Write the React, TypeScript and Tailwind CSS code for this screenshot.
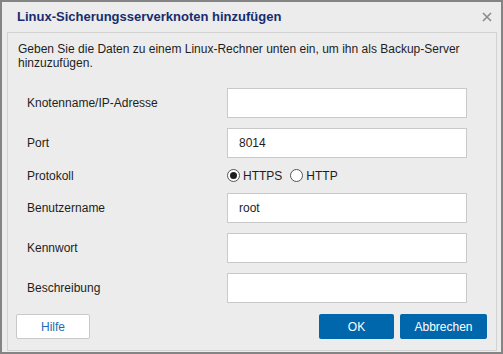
import { useState } from "react";

const font = { fontFamily: '"Liberation Sans", Arial, sans-serif' };

const fields = [
  { label: "Knotenname/IP-Adresse", value: "" },
  { label: "Port", value: "8014" },
];

const fields2 = [
  { label: "Benutzername", value: "root" },
  { label: "Kennwort", value: "", type: "password" },
  { label: "Beschreibung", value: "" },
];

const Row = ({ label, value, type }: { label: string; value: string; type?: string }) => (
  <div className="flex h-[30px] items-center">
    <label className="w-[219px] pl-[19px] text-[12px] text-[#1e1e1e]">{label}</label>
    <input
      type={type ?? "text"}
      defaultValue={value}
      className="h-[30px] w-[240px] border border-[#c9c9c9] bg-white px-[11px] text-[12px] text-[#1e1e1e] outline-none"
    />
  </div>
);

const Radio = ({ checked, label, onClick }: { checked: boolean; label: string; onClick: () => void }) => (
  <button type="button" onClick={onClick} className="flex items-center gap-[3px] text-[12px] text-[#1e1e1e]">
    <span className="flex h-[13px] w-[13px] items-center justify-center rounded-full border border-[#555] bg-white">
      {checked && <span className="h-[7px] w-[7px] rounded-full bg-[#1e1e1e]" />}
    </span>
    {label}
  </button>
);

export default function App() {
  const [proto, setProto] = useState("https");

  return (
    <div className="h-[354px] w-[503px] overflow-hidden bg-[#888]" style={font}>
      <div className="flex h-[354px] flex-col border-2 border-[#848484] bg-[#ececec]">
        <div className="flex h-[30px] shrink-0 items-center justify-between pl-[15px] pr-[9px]">
          <h1 className="text-[13px] font-bold text-[#172d6e]">Linux-Sicherungsserverknoten hinzufügen</h1>
          <svg width="10" height="10" viewBox="0 0 10 10" className="text-[#8a8a8a]">
            <path d="M1 1L9 9M9 1L1 9" stroke="currentColor" strokeWidth="1.6" />
          </svg>
        </div>

        <div className="mb-[1px] ml-[5px] mr-[4px] flex flex-1 flex-col border border-[#d2d2d2] pt-[9px]">
          <p className="pl-[10px] pr-[8px] text-[12px] leading-[14px] text-[#1e1e1e]">
            Geben Sie die Daten zu einem Linux-Rechner unten ein, um ihn als Backup-Server hinzuzufügen.
          </p>

          <div className="mt-[18px] flex flex-col gap-[10px]">
            {fields.map((f) => (
              <Row key={f.label} {...f} />
            ))}
          </div>

          <div className="flex h-[35px] items-center">
            <span className="w-[219px] pl-[19px] text-[12px] text-[#1e1e1e]">Protokoll</span>
            <div className="flex items-center gap-[8px]">
              <Radio checked={proto === "https"} label="HTTPS" onClick={() => setProto("https")} />
              <Radio checked={proto === "http"} label="HTTP" onClick={() => setProto("http")} />
            </div>
          </div>

          <div className="flex flex-col gap-[10px]">
            {fields2.map((f) => (
              <Row key={f.label} {...f} />
            ))}
          </div>

          <div className="mt-[11px] flex items-center justify-between pl-[8px] pr-[9px]">
            <button className="h-[25px] w-[74px] rounded-[2px] border border-[#c9c9c9] bg-white text-[12px] text-[#1a6db3]">
              Hilfe
            </button>
            <div className="flex gap-[6px]">
              <button className="h-[25px] w-[75px] rounded-[2px] bg-[#0067ac] text-[12px] text-white">OK</button>
              <button className="h-[25px] w-[87px] rounded-[2px] bg-[#0067ac] text-[12px] text-white">Abbrechen</button>
            </div>
          </div>
        </div>
      </div>
    </div>
  );
}
